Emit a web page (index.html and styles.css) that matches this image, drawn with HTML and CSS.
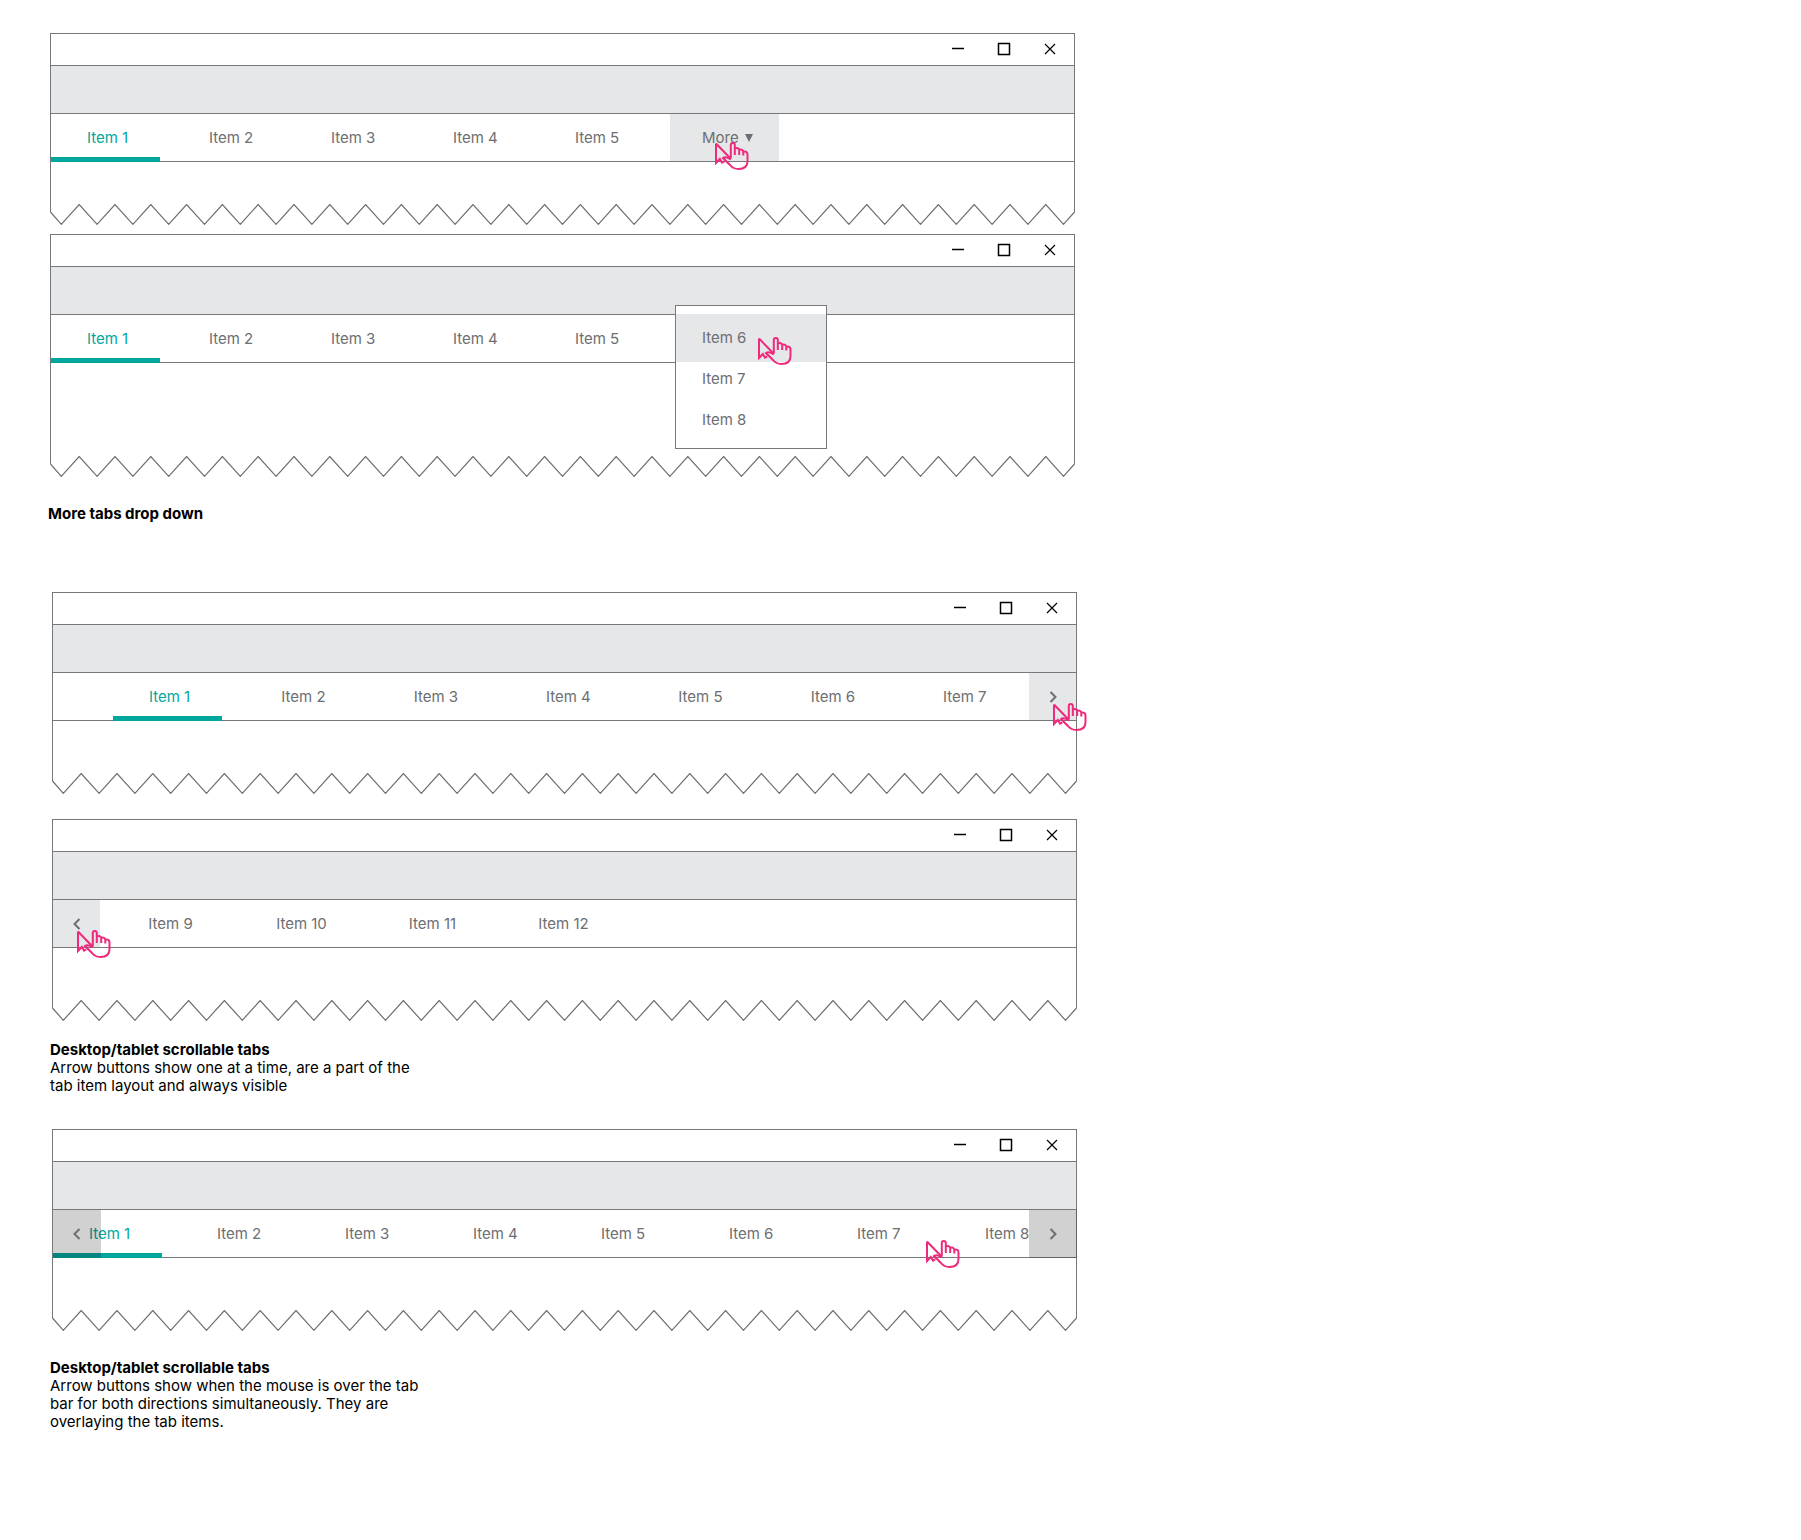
FILE: index.html
```html
<!DOCTYPE html>
<html lang="en">
<head>
<meta charset="utf-8">
<title>Tab overflow patterns</title>
<link rel="stylesheet" href="styles.css">
</head>
<body>
<svg class="symbols" aria-hidden="true">
  <symbol id="minimize" viewBox="0 0 14 14"><path d="M1 6.500H13" /></symbol>
  <symbol id="maximize" viewBox="0 0 14 14"><path d="M1.500 1.500H12.500V12.500H1.500Z" /></symbol>
  <symbol id="close" viewBox="0 0 14 14"><path d="M2 2L12 12M12 2L2 12" stroke-width="1.200" /></symbol>
  <symbol id="next" viewBox="0 0 12 12"><path d="M3.500 1L8.500 6L3.500 11" /></symbol>
  <symbol id="prev" viewBox="0 0 12 12"><path d="M8.500 1L3.500 6L8.500 11" /></symbol>
  <symbol id="torn" viewBox="0 0 1025 21" preserveAspectRatio="none">
    <path vector-effect="non-scaling-stroke" d="M.5 8L11.300 20.300L29.200 .5l17.900 19.800l17.900 -19.800l17.900 19.800l17.900 -19.800l17.900 19.800l17.900 -19.800l17.900 19.800l17.900 -19.800l17.900 19.800l17.900 -19.800l17.900 19.800l17.900 -19.800l17.900 19.800l17.900 -19.800l17.900 19.800l17.900 -19.800l17.900 19.800l17.900 -19.800l17.900 19.800l17.900 -19.800l17.900 19.800l17.900 -19.800l17.900 19.800l17.900 -19.800l17.900 19.800l17.900 -19.800l17.900 19.800l17.900 -19.800l17.900 19.800l17.900 -19.800l17.900 19.800l17.900 -19.800l17.900 19.800l17.900 -19.800l17.900 19.800l17.900 -19.800l17.900 19.800l17.900 -19.800l17.900 19.800l17.900 -19.800l17.900 19.800l17.900 -19.800l17.900 19.800l17.900 -19.800l17.900 19.800l17.900 -19.800l17.900 19.800l17.900 -19.800l17.900 19.800l17.900 -19.800l17.900 19.800l17.900 -19.800l17.900 19.800l17.900 -19.800L1013.500 20.300L1024.500 8" />
  </symbol>
  <symbol id="pointer" viewBox="0 0 34 30">
    <path d="M1 2.500V22L4.800 18L7 21.600L9.300 20.300M1 2.500L15.500 17.500" />
    <path d="M15.800 17.500V4a2 2 0 0 1 4 0V14M19.800 7.600C22 6.600 24 7 24.200 9V14M24.200 9C26.500 8 28.300 9 28.300 11V14.500M28.300 11C30.500 10 32.500 11 32.500 13.500V20C32.500 25.500 29 28 23.500 28C19.500 28 17 26.500 15 24L8 17C10 15.500 12.500 16 15.800 18.500" />
  </symbol>
</svg>

<main class="page">
  <figure class="example">
    <div class="window">
      <div class="titlebar">
        <button aria-label="Minimize"><svg><use href="#minimize"/></svg></button>
        <button aria-label="Maximize"><svg><use href="#maximize"/></svg></button>
        <button aria-label="Close"><svg><use href="#close"/></svg></button>
      </div>
      <div class="toolbar"></div>
      <nav class="tabs tabs-more">
        <button class="tab active">Item 1</button>
        <button class="tab">Item 2</button>
        <button class="tab">Item 3</button>
        <button class="tab">Item 4</button>
        <button class="tab">Item 5</button>
        <button class="tab more">More <span class="caret"></span>
          <svg class="pointer"><use href="#pointer"/></svg></button>
      </nav>
      <div class="content short"></div>
      <svg class="torn"><use href="#torn"/></svg>
    </div>
    <div class="window window-open">
      <div class="titlebar">
        <button aria-label="Minimize"><svg><use href="#minimize"/></svg></button>
        <button aria-label="Maximize"><svg><use href="#maximize"/></svg></button>
        <button aria-label="Close"><svg><use href="#close"/></svg></button>
      </div>
      <div class="toolbar"></div>
      <nav class="tabs tabs-more">
        <button class="tab active">Item 1</button>
        <button class="tab">Item 2</button>
        <button class="tab">Item 3</button>
        <button class="tab">Item 4</button>
        <button class="tab">Item 5</button>
        <div class="menu">
          <button class="hover">Item 6 <svg class="pointer"><use href="#pointer"/></svg></button>
          <button>Item 7</button>
          <button>Item 8</button>
        </div>
      </nav>
      <div class="content tall"></div>
      <svg class="torn"><use href="#torn"/></svg>
    </div>
    <figcaption><strong>More tabs drop down</strong></figcaption>
  </figure>

  <figure class="example scrolling">
    <div class="window">
      <div class="titlebar">
        <button aria-label="Minimize"><svg><use href="#minimize"/></svg></button>
        <button aria-label="Maximize"><svg><use href="#maximize"/></svg></button>
        <button aria-label="Close"><svg><use href="#close"/></svg></button>
      </div>
      <div class="toolbar"></div>
      <nav class="tabs">
        <div class="tab-list spread">
          <button class="tab active">Item 1</button>
          <button class="tab">Item 2</button>
          <button class="tab">Item 3</button>
          <button class="tab">Item 4</button>
          <button class="tab">Item 5</button>
          <button class="tab">Item 6</button>
          <button class="tab">Item 7</button>
        </div>
        <button class="arrow" aria-label="Next tabs"><svg class="chevron"><use href="#next"/></svg>
          <svg class="pointer"><use href="#pointer"/></svg></button>
      </nav>
      <div class="content"></div>
      <svg class="torn"><use href="#torn"/></svg>
    </div>
    <div class="window window-second">
      <div class="titlebar">
        <button aria-label="Minimize"><svg><use href="#minimize"/></svg></button>
        <button aria-label="Maximize"><svg><use href="#maximize"/></svg></button>
        <button aria-label="Close"><svg><use href="#close"/></svg></button>
      </div>
      <div class="toolbar"></div>
      <nav class="tabs">
        <button class="arrow" aria-label="Previous tabs"><svg class="chevron"><use href="#prev"/></svg>
          <svg class="pointer"><use href="#pointer"/></svg></button>
        <div class="tab-list rest">
          <button class="tab">Item 9</button>
          <button class="tab">Item 10</button>
          <button class="tab">Item 11</button>
          <button class="tab">Item 12</button>
        </div>
      </nav>
      <div class="content"></div>
      <svg class="torn"><use href="#torn"/></svg>
    </div>
    <figcaption>
      <strong>Desktop/tablet scrollable tabs</strong>
      <p>Arrow buttons show one at a time, are a part of the tab item layout and always visible</p>
    </figcaption>
  </figure>

  <figure class="example overlay">
    <div class="window">
      <div class="titlebar">
        <button aria-label="Minimize"><svg><use href="#minimize"/></svg></button>
        <button aria-label="Maximize"><svg><use href="#maximize"/></svg></button>
        <button aria-label="Close"><svg><use href="#close"/></svg></button>
      </div>
      <div class="toolbar"></div>
      <nav class="tabs">
        <div class="tab-list clipped">
          <button class="tab active">Item 1</button>
          <button class="tab">Item 2</button>
          <button class="tab">Item 3</button>
          <button class="tab">Item 4</button>
          <button class="tab">Item 5</button>
          <button class="tab">Item 6</button>
          <button class="tab">Item 7</button>
          <button class="tab">Item 8</button>
        </div>
        <button class="arrow over over-left" aria-label="Previous tabs"><svg class="chevron"><use href="#prev"/></svg></button>
        <button class="arrow over over-right" aria-label="Next tabs"><svg class="chevron"><use href="#next"/></svg></button>
        <svg class="pointer"><use href="#pointer"/></svg>
      </nav>
      <div class="content"></div>
      <svg class="torn"><use href="#torn"/></svg>
    </div>
    <figcaption>
      <strong>Desktop/tablet scrollable tabs</strong>
      <p>Arrow buttons show when the mouse is over the tab bar for both directions simultaneously. They are overlaying the tab items.</p>
    </figcaption>
  </figure>
</main>
</body>
</html>
```
FILE: styles.css
```css
:root {
  --line: #77787b;
  --fill: #e6e7e9;
  --teal: #00a79d;
  --pink: #ee2a7b;
}

* { box-sizing: border-box; }

body {
  margin: 0;
  background: #fff;
  color: #000;
  font: 15px/18px Inter, "Liberation Sans", sans-serif;
}

button {
  margin: 0;
  padding: 0;
  border: 0;
  background: none;
  color: #6d6e71;
  font: inherit;
}

.symbols { position: absolute; width: 0; height: 0; }

svg { display: block; fill: none; stroke-width: 2; }

.page { padding: 33px 50px; }

.example { margin: 0; max-width: 1025px; }

.window { display: flex; flex-direction: column; }
.window-open { margin-top: 9px; }
.window-second { margin-top: 25px; }

.titlebar {
  display: flex;
  justify-content: flex-end;
  gap: 32px;
  height: 32px;
  padding: 8px 17px 0;
  border: solid var(--line);
  border-width: 1px 1px 0;
}
.titlebar button { width: 14px; height: 14px; }
.titlebar svg { width: 14px; height: 14px; stroke: #000; stroke-width: 1.5; }

.toolbar {
  height: 49px;
  background: var(--fill);
  border: 1px solid var(--line);
}

.tabs {
  position: relative;
  display: flex;
  height: 48px;
  border: solid var(--line);
  border-width: 0 1px 1px;
}
.tabs-more { gap: 13px; }

.tab {
  flex: 0 0 109px;
  height: 48px;
  padding-left: 36px;
  text-align: left;
}
.tab.active { color: var(--teal); border-bottom: 5px solid var(--teal); padding-top: 5px; }

.tab.more {
  position: relative;
  display: flex;
  align-items: center;
  gap: 6px;
  height: 47px;
  margin-left: 9px;
  padding-left: 32px;
  background: var(--fill);
}
.caret {
  border: solid transparent;
  border-width: 8px 4px 0;
  border-top-color: #6d6e71;
}

.tab-list { display: flex; flex: 1; min-width: 0; }
.spread { justify-content: space-between; padding: 0 13px 0 60px; }
.rest { gap: 22px; padding-left: 16px; }
.rest .tab { padding: 0; text-align: center; }
.clipped { gap: 19px; overflow: hidden; height: 48px; }

.arrow {
  position: relative;
  display: grid;
  place-items: center;
  flex: 0 0 47px;
  height: 47px;
  background: var(--fill);
}
.chevron { width: 12px; height: 12px; stroke: #6d6e71; }
.over { position: absolute; top: 0; height: 48px; width: 48px; background: rgb(0 0 0 / 18%); }
.over-left { left: 0; }
.over-right { right: -1px; }

.pointer {
  position: absolute;
  z-index: 2;
  left: 45px;
  top: 27px;
  width: 34px;
  height: 30px;
  stroke: var(--pink);
}
.arrow .pointer { left: 24px; top: 29px; }
.overlay .pointer { left: 873px; top: 29px; }

.menu {
  position: absolute;
  left: 624px;
  top: -10px;
  width: 152px;
  height: 144px;
  padding-top: 8px;
  background: #fff;
  border: 1px solid var(--line);
}
.menu button {
  display: block;
  width: 100%;
  height: 41px;
  padding: 0 0 8px 26px;
  text-align: left;
}
.menu .hover {
  position: relative;
  height: 48px;
  padding-bottom: 0;
  background: var(--fill);
}
.menu .pointer { left: 82px; top: 22px; }

.content { height: 60px; border: solid var(--line); border-width: 0 1px; }
.short { height: 50px; }
.tall { height: 101px; }

.torn { width: 100%; height: 21px; margin-top: -8px; stroke: #6d6e71; stroke-width: 1.2; }

figcaption { width: 376px; padding-top: 28px; margin-left: -2px; }
figcaption strong { display: block; font-weight: 700; }
figcaption p { margin: 0; }

.scrolling { padding-top: 69px; }
.scrolling .window, .overlay .window { margin-left: 2px; margin-right: -2px; }
.scrolling figcaption { padding-top: 20px; margin-left: 0; }
.overlay { padding-top: 34px; }
.overlay figcaption { margin-left: 0; }
```
